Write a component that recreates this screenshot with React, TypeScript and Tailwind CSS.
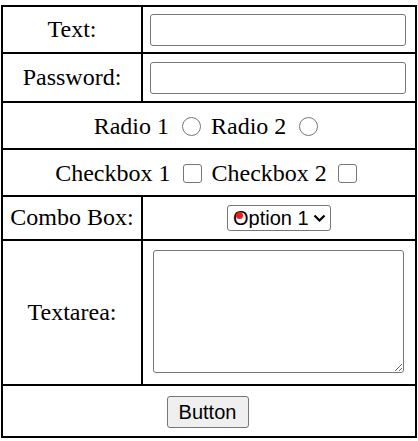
import { useState } from 'react';

const serif = "font-['Liberation_Serif','Times_New_Roman',serif]";
const sans = "font-['Liberation_Sans',Arial,sans-serif]";

function Row({ label, height, children }: { label: string; height: string; children: React.ReactNode }) {
    return (
        <div className={`flex ${height}`}>
            <div className="w-[138px] shrink-0 flex items-center justify-center">{label}</div>
            <div className="flex-1 border-l-2 border-black flex items-center justify-center">{children}</div>
        </div>
    );
}

export default function App() {
    const [option, setOption] = useState('1');

    return (
        <div className={`min-h-[441px] bg-white pl-px pt-[5px] text-black ${serif} text-[24px] leading-[1.15]`}>
            <div className="w-[416px] border-2 border-black flex flex-col divide-y-2 divide-black">
                <Row label="Text:" height="h-[47px]">
                    <input
                        type="text"
                        className="w-[256px] h-[32px] mr-[2px] border border-[#767676] rounded-[3px] bg-white outline-none"
                    />
                </Row>

                <Row label="Password:" height="h-[49px]">
                    <input
                        type="password"
                        className="w-[256px] h-[32px] mr-[2px] mt-[1px] border border-[#767676] rounded-[3px] bg-white outline-none"
                    />
                </Row>

                {/* radio + checkbox span both columns */}
                <div className="h-[47px] flex items-center justify-center pt-[2px]">
                    <span>Radio 1</span>
                    <input
                        type="radio"
                        name="r"
                        className="appearance-none w-[19px] h-[19px] ml-[13px] mr-[10px] rounded-full border-[1.5px] border-[#767676] bg-white"
                    />
                    <span>Radio 2</span>
                    <input
                        type="radio"
                        name="r"
                        className="appearance-none w-[19px] h-[19px] ml-[13px] mr-[6px] rounded-full border-[1.5px] border-[#767676] bg-white"
                    />
                </div>

                <div className="h-[47px] flex items-center justify-center pt-[2px]">
                    <span>Checkbox 1</span>
                    <input
                        type="checkbox"
                        className="appearance-none w-[19px] h-[19px] ml-[12px] mr-[10px] rounded-[3px] border-[1.5px] border-[#767676] bg-white"
                    />
                    <span>Checkbox 2</span>
                    <input
                        type="checkbox"
                        className="appearance-none w-[19px] h-[19px] ml-[11px] mr-[6px] rounded-[3px] border-[1.5px] border-[#767676] bg-white"
                    />
                </div>

                <Row label="Combo Box:" height="h-[44px]">
                    <div className="relative">
                        <select
                            value={option}
                            onChange={(e) => setOption(e.target.value)}
                            className={`appearance-none w-[104px] h-[26px] pl-[5px] pr-[22px] border border-[#767676] rounded-[3px] bg-white ${sans} text-[20px] leading-none outline-none`}
                        >
                            <option value="1">Option 1</option>
                            <option value="2">Option 2</option>
                        </select>
                        <svg
                            className="absolute right-[5px] top-[10px] pointer-events-none"
                            width="13"
                            height="8"
                            viewBox="0 0 13 8"
                            fill="none"
                        >
                            <path d="M1.5 1.5l5 5 5-5" stroke="#000" strokeWidth="2.2" />
                        </svg>
                        {/* red dot in the screenshot */}
                        <span className="absolute left-[9px] top-[8px] w-[7px] h-[7px] rounded-full bg-[#ee1c24] pointer-events-none" />
                    </div>
                </Row>

                <Row label="Textarea:" height="h-[145px]">
                    <textarea className="w-[251px] h-[123px] mb-[3px] mr-[2px] border border-[#767676] rounded-[3px] bg-white outline-none" />
                </Row>

                <div className="h-[50px] flex items-center justify-center pt-[2px]">
                    <button
                        className={`w-[82px] h-[32px] ml-[-3px] border border-[#767676] rounded-[3px] bg-[#efefef] ${sans} text-[20px] leading-none`}
                    >
                        Button
                    </button>
                </div>
            </div>
        </div>
    );
}
